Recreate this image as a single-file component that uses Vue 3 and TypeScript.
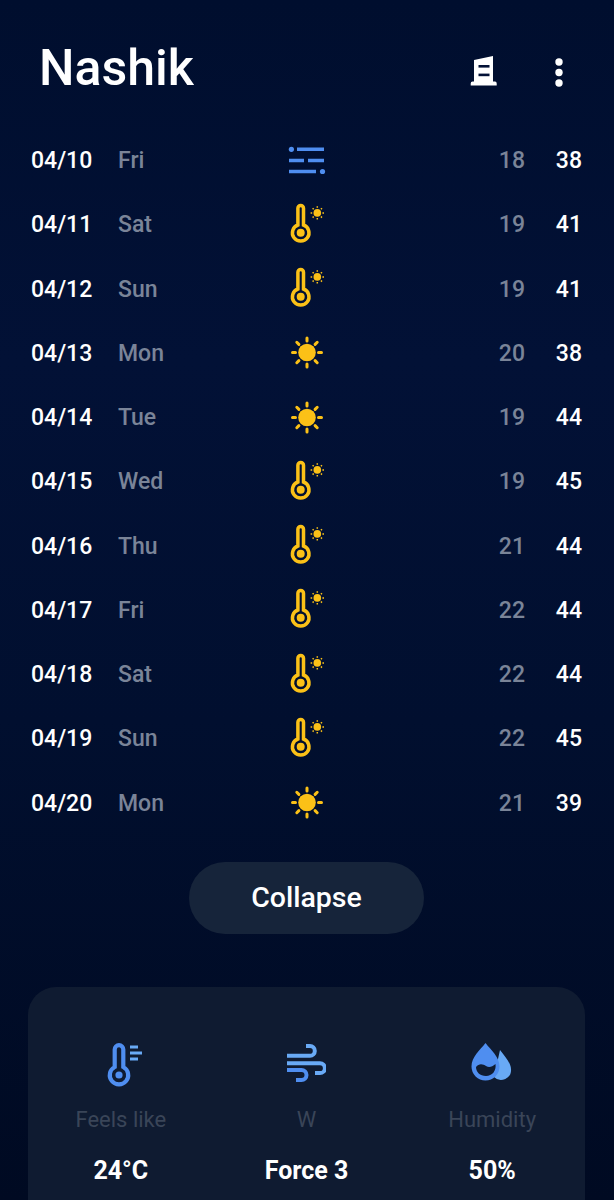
<script setup lang="ts">
type Kind = 'cloud' | 'hot' | 'sun'

interface Day {
  date: string
  dow: string
  kind: Kind
  low: number
  high: number
}

const days: Day[] = [
  { date: '04/10', dow: 'Fri', kind: 'cloud', low: 18, high: 38 },
  { date: '04/11', dow: 'Sat', kind: 'hot', low: 19, high: 41 },
  { date: '04/12', dow: 'Sun', kind: 'hot', low: 19, high: 41 },
  { date: '04/13', dow: 'Mon', kind: 'sun', low: 20, high: 38 },
  { date: '04/14', dow: 'Tue', kind: 'sun', low: 19, high: 44 },
  { date: '04/15', dow: 'Wed', kind: 'hot', low: 19, high: 45 },
  { date: '04/16', dow: 'Thu', kind: 'hot', low: 21, high: 44 },
  { date: '04/17', dow: 'Fri', kind: 'hot', low: 22, high: 44 },
  { date: '04/18', dow: 'Sat', kind: 'hot', low: 22, high: 44 },
  { date: '04/19', dow: 'Sun', kind: 'hot', low: 22, high: 45 },
  { date: '04/20', dow: 'Mon', kind: 'sun', low: 21, high: 39 }
]
</script>

<template>
  <div class="page">
    <header class="header">
      <h1 class="city">Nashik</h1>
      <svg class="building" width="28" height="40" viewBox="0 0 28 40">
        <path d="M4 12 L23 8 V33.5 H25 Q26.7 33.5 26.7 35.5 V37.5 H0.7 V35.5 Q0.7 33.5 2.5 33.5 H4 Z" fill="#fff" />
        <rect x="8.5" y="17" width="11" height="2.6" fill="#021136" />
        <rect x="8.5" y="25.6" width="11" height="2.6" fill="#021136" />
      </svg>
      <svg class="dots" width="14" height="40" viewBox="0 0 14 40">
        <circle cx="7" cy="14" r="3.7" fill="#fff" />
        <circle cx="7" cy="24.5" r="3.7" fill="#fff" />
        <circle cx="7" cy="35" r="3.7" fill="#fff" />
      </svg>
    </header>

    <div class="list">
      <div v-for="d in days" :key="d.date" class="row">
        <span class="date">{{ d.date }}</span>
        <span class="dow">{{ d.dow }}</span>
        <span class="icon">
          <svg v-if="d.kind === 'cloud'" width="40" height="32" viewBox="0 0 40 32" fill="none" stroke="#4f8ef0" stroke-width="3.4">
            <circle cx="4.4" cy="4.3" r="2.6" fill="#4f8ef0" stroke="none" />
            <path d="M10 4.3 H37 M2 15.5 H17 M21 15.5 H37 M2 26.5 H29" />
            <circle cx="35.5" cy="26.5" r="2.6" fill="#4f8ef0" stroke="none" />
          </svg>
          <svg v-else-if="d.kind === 'hot'" width="40" height="44" viewBox="0 0 40 44" fill="none" stroke="#fbc117">
            <path d="M10.9 5.3 A2.8 2.8 0 0 1 16.5 5.3 V22 A8.3 8.3 0 1 1 10.9 22 Z" stroke-width="3.5" />
            <circle cx="13.7" cy="29.7" r="4" fill="#fbc117" stroke="none" />
            <circle cx="30.3" cy="9.9" r="3.8" fill="#fbc117" stroke="none" />
            <path d="M30.3 3.2 V4.8 M30.3 15 V16.6 M23.6 9.9 H25.2 M35.4 9.9 H37 M25.6 5.2 L26.7 6.3 M33.9 13.5 L35 14.6 M25.6 14.6 L26.7 13.5 M33.9 6.3 L35 5.2" stroke-width="1.5" />
          </svg>
          <svg v-else width="34" height="34" viewBox="0 0 34 34" fill="none" stroke="#fbc117" stroke-width="3" stroke-linecap="round">
            <circle cx="17" cy="16.5" r="8.8" fill="#fbc117" stroke="none" />
            <path d="M17 2 V5 M17 28 V31 M2.5 16.5 H5.5 M28.5 16.5 H31.5 M6.8 6.3 L8.9 8.4 M25.1 24.6 L27.2 26.7 M6.8 26.7 L8.9 24.6 M25.1 8.4 L27.2 6.3" />
          </svg>
        </span>
        <span class="low">{{ d.low }}</span>
        <span class="high">{{ d.high }}</span>
      </div>
    </div>

    <button class="collapse">Collapse</button>

    <section class="card">
      <div class="metric">
        <svg width="44" height="44" viewBox="0 0 44 44" fill="none">
          <path d="M15.7 6.5 A4.3 4.3 0 0 1 24.3 6.5 V24 A9.2 9.2 0 1 1 15.7 24 Z" stroke="#4f8ef0" stroke-width="4.2" />
          <circle cx="20" cy="32" r="3.6" fill="#4f8ef0" />
          <path d="M31 4 H39 M31 10 H43 M31 16 H39" stroke="#69aaf5" stroke-width="3" />
        </svg>
        <span class="label">Feels like</span>
        <span class="value">24°C</span>
      </div>
      <div class="metric">
        <svg width="40" height="44" viewBox="0 0 40 44" fill="none" stroke-width="4">
          <path d="M1 27 H15.5 A5 5 0 0 1 15.5 37 H10" stroke="#4f8ef0" />
          <path d="M1 12.7 H24 A4.8 4.8 0 0 0 24 3.1 H20" stroke="#69aaf5" />
          <path d="M1 20.3 H34 A4.9 4.9 0 0 1 34 30.1 H29" stroke="#69aaf5" />
        </svg>
        <span class="label">W</span>
        <span class="value">Force 3</span>
      </div>
      <div class="metric">
        <svg width="44" height="44" viewBox="0 0 44 44">
          <path d="M30 7 C34 12.5 41 20 41 26 A10 10 0 0 1 24 34 Z" fill="#69aaf5" />
          <path d="M15.5 0 C21 7 29.5 14 29.5 23.5 A14 14 0 0 1 1.5 23.5 C1.5 14 10 7 15.5 0 Z" fill="#4f8ef0" />
          <path d="M6 24 C9 20 13 21 16 23 C19 25 22 24 25.5 21 C26.5 28 22 33 16 33 C10 33 6 29 6 24 Z" fill="#0f1b31" />
        </svg>
        <span class="label">Humidity</span>
        <span class="value">50%</span>
      </div>
    </section>
  </div>
</template>

<style>
html,
body {
  background: #000b25;
}
</style>

<style scoped>
.page {
  height: 1200px;
  overflow: hidden;
  display: flex;
  flex-direction: column;
  font-family: Roboto, "Liberation Sans", sans-serif;
  background: linear-gradient(180deg, #000e2e 0%, #021136 30%, #010f2f 60%, #000a22 100%);
  color: #fff;
}

.header {
  height: 128.4px;
  flex: none;
  display: flex;
  align-items: center;
  padding: 8px 48px 0 39px;
  box-sizing: border-box;
}

.city {
  margin: 0 auto 0 0;
  font-size: 50px;
  font-weight: 500;
}

.building {
  margin-right: 54px;
}

.list {
  flex: none;
}

.row {
  height: 64.25px;
  display: grid;
  grid-template-columns: 87px 158px 62px 1fr 57px;
  align-items: center;
  padding: 0 32px 0 31px;
  font-size: 23px;
  font-weight: 500;
}

.dow,
.low {
  color: #7a8498;
}

.icon {
  display: flex;
  justify-content: center;
}

.icon svg {
  display: block;
}

.low,
.high {
  text-align: right;
}

.collapse {
  flex: none;
  align-self: center;
  width: 235px;
  height: 72px;
  margin: 26.6px 1px 0 0;
  border: none;
  border-radius: 36px;
  background: #16243a;
  color: #fff;
  font-family: inherit;
  font-size: 28.5px;
  font-weight: 500;
}

.card {
  flex: none;
  margin: 53px 29px 0 28px;
  padding: 56px 0 60px;
  display: grid;
  grid-template-columns: repeat(3, 1fr);
  border-radius: 28px;
  background: #0f1b31;
}

.metric {
  display: flex;
  flex-direction: column;
  align-items: center;
}

.label {
  margin-top: 20px;
  font-size: 22px;
  color: #3a4558;
}

.value {
  margin-top: 24px;
  font-size: 25px;
  font-weight: 700;
}
</style>
